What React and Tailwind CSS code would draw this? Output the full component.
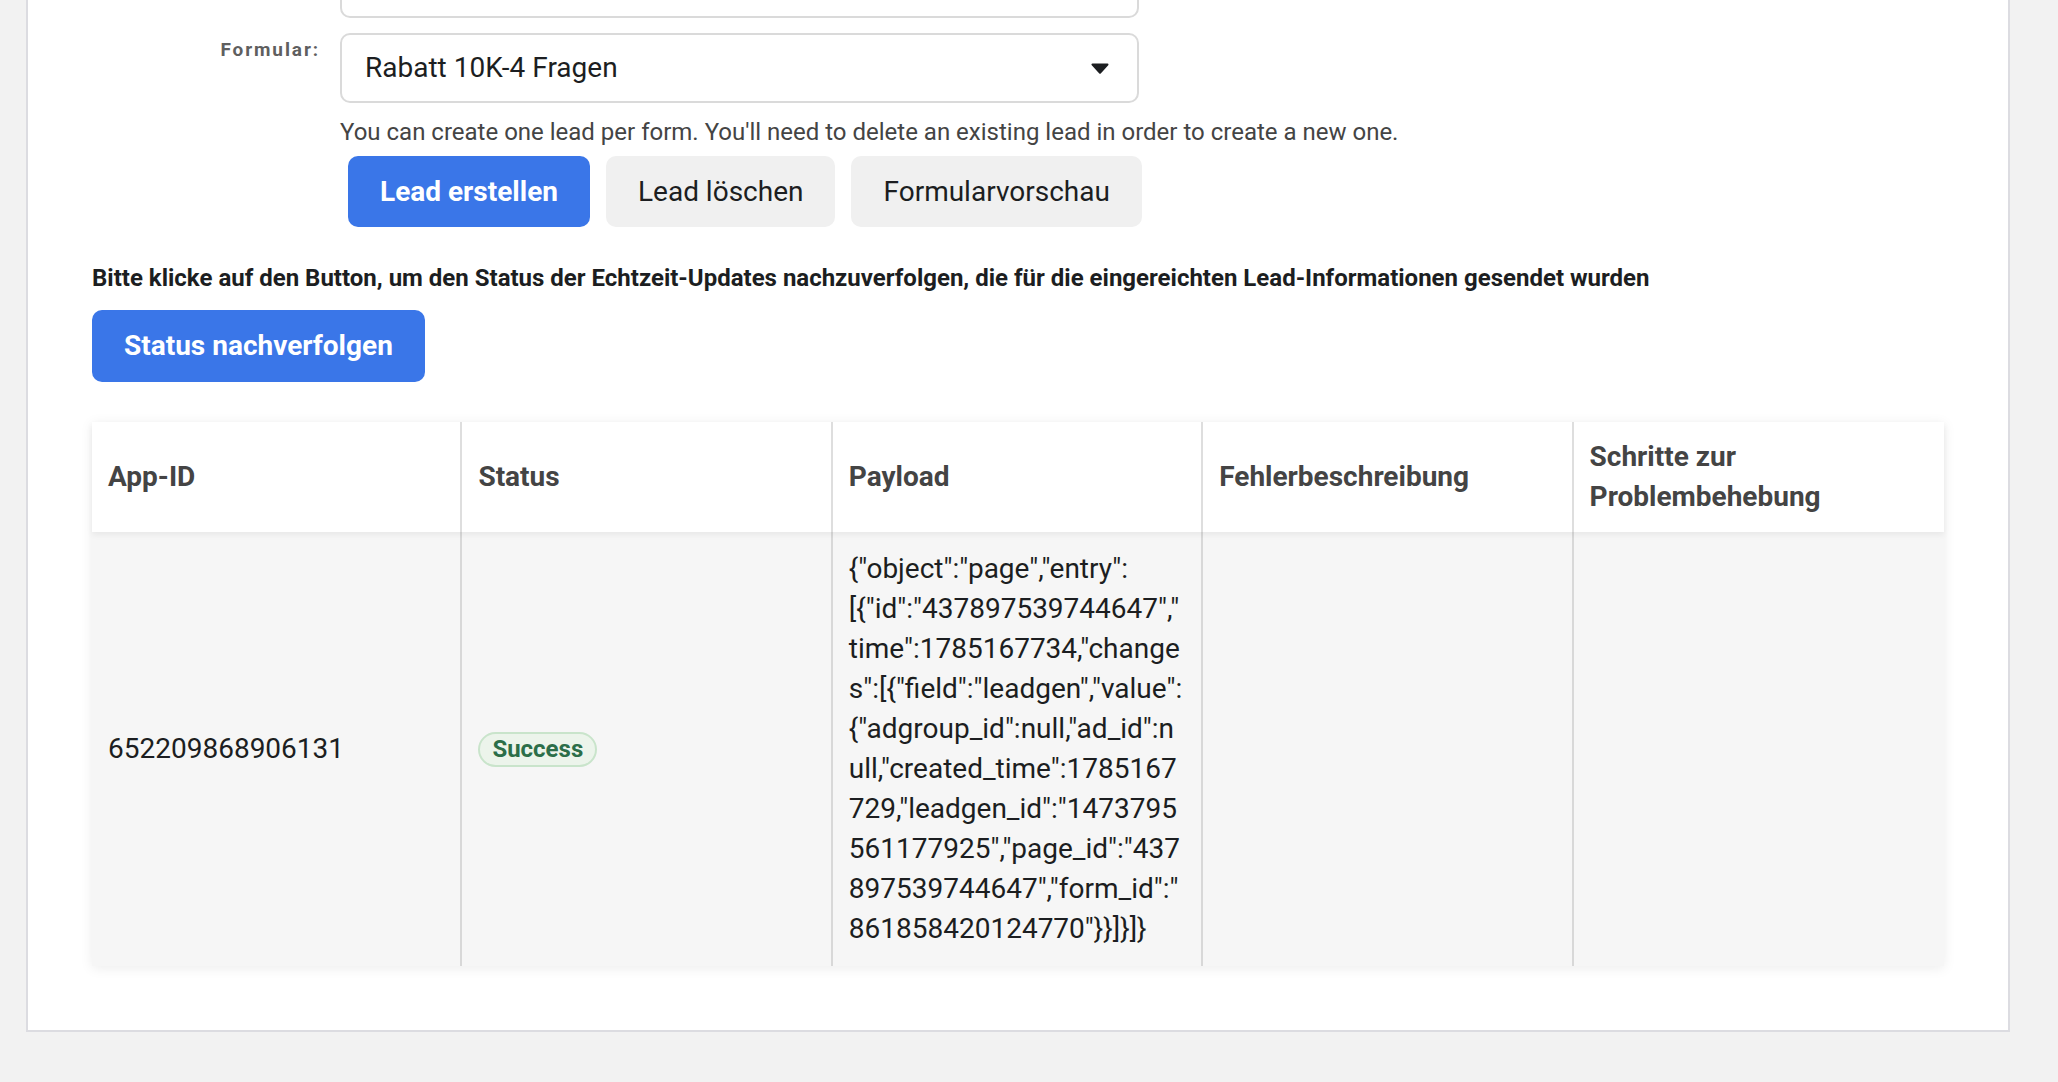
export default function App() {
  const payload =
    '{"object":"page","entry":[{"id":"437897539744647","time":1785167734,"changes":[{"field":"leadgen","value":{"adgroup_id":null,"ad_id":null,"created_time":1785167729,"leadgen_id":"1473795561177925","page_id":"437897539744647","form_id":"861858420124770"}}]}]}';
  return (
    <div className="min-h-screen w-full overflow-hidden bg-[#f2f2f2] font-[Roboto,sans-serif]">
      <div className="ml-[26px] mt-[-60px] w-[1984px] border-2 border-[#dcdce1] bg-white px-[64px] pb-[64px] pt-[6px]">
        {/* top input (cut off) */}
        <div className="flex">
          <div className="w-[228px]" />
          <div className="ml-[20px] h-[70px] w-[799px] rounded-[10px] border-2 border-[#dadada]" />
        </div>
        {/* Formular select */}
        <div className="mt-[15px] flex items-start">
          <div className="w-[228px] pt-[4px] text-right text-[19px] font-bold leading-[26px] tracking-[1.9px] text-[#5f5f5f]">
            Formular:
          </div>
          <div className="ml-[20px] flex h-[70px] w-[799px] items-center justify-between rounded-[10px] border-2 border-[#dadada] pl-[23px] pr-[28px]">
            <span className="text-[28px] leading-[38px] text-[#1c1e21]">Rabatt 10K-4 Fragen</span>
            <svg width="18" height="11" viewBox="0 0 18 11">
              <path d="M1.5 1.5 H16.5 L9 9.8 Z" fill="#1c1e21" stroke="#1c1e21" strokeWidth="2" strokeLinejoin="round" />
            </svg>
          </div>
        </div>
        <div className="ml-[248px] mt-[12px] text-[24px] leading-[34px] text-[#444444]">
          You can create one lead per form. You'll need to delete an existing lead in order to create a new one.
        </div>
        <div className="ml-[256px] mt-[7px] flex gap-[16px]">
          <button className="h-[71px] rounded-[10px] bg-[#3a76e8] px-[32px] text-[28px] font-bold text-white">
            Lead erstellen
          </button>
          <button className="h-[71px] rounded-[10px] bg-[#f0f0f0] px-[32px] text-[28px] text-[#1c1e21]">
            Lead löschen
          </button>
          <button className="h-[71px] rounded-[10px] bg-[#f0f0f0] px-[32px] text-[28px] text-[#1c1e21]">
            Formularvorschau
          </button>
        </div>
        <div className="mt-[34px] text-[24px] font-bold leading-[34px] text-[#1c1e21]">
          Bitte klicke auf den Button, um den Status der Echtzeit-Updates nachzuverfolgen, die für die eingereichten Lead-Informationen gesendet wurden
        </div>
        <button className="mt-[15px] h-[72px] rounded-[10px] bg-[#3a76e8] px-[32px] text-[28px] font-bold text-white">
          Status nachverfolgen
        </button>
        {/* table */}
        <div className="mt-[40px] shadow-[0_2px_12px_rgba(0,0,0,0.08)]">
          <div className="relative z-10 grid grid-cols-5 bg-white shadow-[0_3px_6px_rgba(0,0,0,0.06)]">
            {['App-ID', 'Status', 'Payload', 'Fehlerbeschreibung', 'Schritte zur Problembehebung'].map((h, i) => (
              <div
                key={h}
                className={
                  'flex items-center px-[16px] py-[15px] text-[28px] font-bold leading-[40px] text-[#444444] ' +
                  (i < 4 ? 'border-r-2 border-[#dedede]' : '')
                }
              >
                {h}
              </div>
            ))}
          </div>
          <div className="grid grid-cols-5 bg-[#f6f6f6] text-[28px] leading-[40px] text-[#1c1e21]">
            <div className="flex items-center border-r-2 border-[#d8d8d8] px-[16px] py-[17px]">652209868906131</div>
            <div className="flex items-center border-r-2 border-[#d8d8d8] px-[16px] py-[17px]">
              <span className="inline-flex h-[35px] items-center rounded-full border-2 border-[#c9e4cb] bg-[#ecf4eb] px-[12px] text-[24px] font-bold text-[#2c6e49]">
                Success
              </span>
            </div>
            <div className="flex items-center border-r-2 border-[#d8d8d8] px-[16px] py-[17px]">
              <div className="min-w-0 break-words">{payload}</div>
            </div>
            <div className="border-r-2 border-[#d8d8d8]" />
            <div />
          </div>
        </div>
      </div>
    </div>
  );
}
